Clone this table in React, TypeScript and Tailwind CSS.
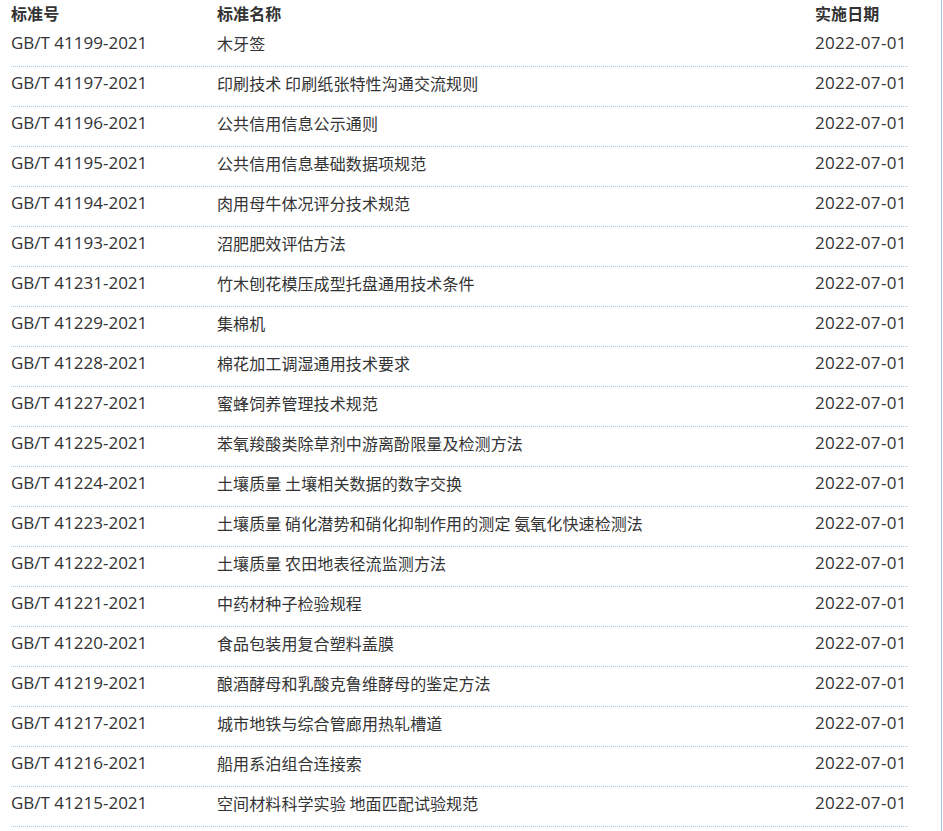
const rows: [string, string, string][] = [
  ['GB/T 41199-2021', '木牙签', '2022-07-01'],
  ['GB/T 41197-2021', '印刷技术 印刷纸张特性沟通交流规则', '2022-07-01'],
  ['GB/T 41196-2021', '公共信用信息公示通则', '2022-07-01'],
  ['GB/T 41195-2021', '公共信用信息基础数据项规范', '2022-07-01'],
  ['GB/T 41194-2021', '肉用母牛体况评分技术规范', '2022-07-01'],
  ['GB/T 41193-2021', '沼肥肥效评估方法', '2022-07-01'],
  ['GB/T 41231-2021', '竹木刨花模压成型托盘通用技术条件', '2022-07-01'],
  ['GB/T 41229-2021', '集棉机', '2022-07-01'],
  ['GB/T 41228-2021', '棉花加工调湿通用技术要求', '2022-07-01'],
  ['GB/T 41227-2021', '蜜蜂饲养管理技术规范', '2022-07-01'],
  ['GB/T 41225-2021', '苯氧羧酸类除草剂中游离酚限量及检测方法', '2022-07-01'],
  ['GB/T 41224-2021', '土壤质量 土壤相关数据的数字交换', '2022-07-01'],
  ['GB/T 41223-2021', '土壤质量 硝化潜势和硝化抑制作用的测定 氨氧化快速检测法', '2022-07-01'],
  ['GB/T 41222-2021', '土壤质量 农田地表径流监测方法', '2022-07-01'],
  ['GB/T 41221-2021', '中药材种子检验规程', '2022-07-01'],
  ['GB/T 41220-2021', '食品包装用复合塑料盖膜', '2022-07-01'],
  ['GB/T 41219-2021', '酿酒酵母和乳酸克鲁维酵母的鉴定方法', '2022-07-01'],
  ['GB/T 41217-2021', '城市地铁与综合管廊用热轧槽道', '2022-07-01'],
  ['GB/T 41216-2021', '船用系泊组合连接索', '2022-07-01'],
  ['GB/T 41215-2021', '空间材料科学实验 地面匹配试验规范', '2022-07-01'],
];

const latin = "font-['Open_Sans','Noto_Sans_CJK_SC',sans-serif] text-[17px]";
const cjk = "font-['Noto_Sans_CJK_SC',sans-serif] text-[16px] tracking-[0.1px]";

export default function App() {
  return (
    <div className="w-[942px] min-h-[831px] bg-white border-r border-[#a6c4e4] text-[#333]">
      <div className="ml-[11px] w-[897px]">
        <div className={`flex h-[27px] leading-[26px] font-bold ${cjk}`}>
          <div className="w-[206px]">标准号</div>
          <div className="flex-1">标准名称</div>
          <div className="w-[93px] -ml-px">实施日期</div>
        </div>
        {rows.map(([code, name, date]) => (
          <div
            key={code}
            className="flex h-10 leading-[32px] border-b border-dotted border-[#a3c8ea]"
          >
            <div className={`w-[206px] ${latin}`}>{code}</div>
            <div className={`flex-1 ${cjk}`}>{name}</div>
            <div className={`w-[93px] tracking-[0.3px] ${latin}`}>{date}</div>
          </div>
        ))}
      </div>
    </div>
  );
}
